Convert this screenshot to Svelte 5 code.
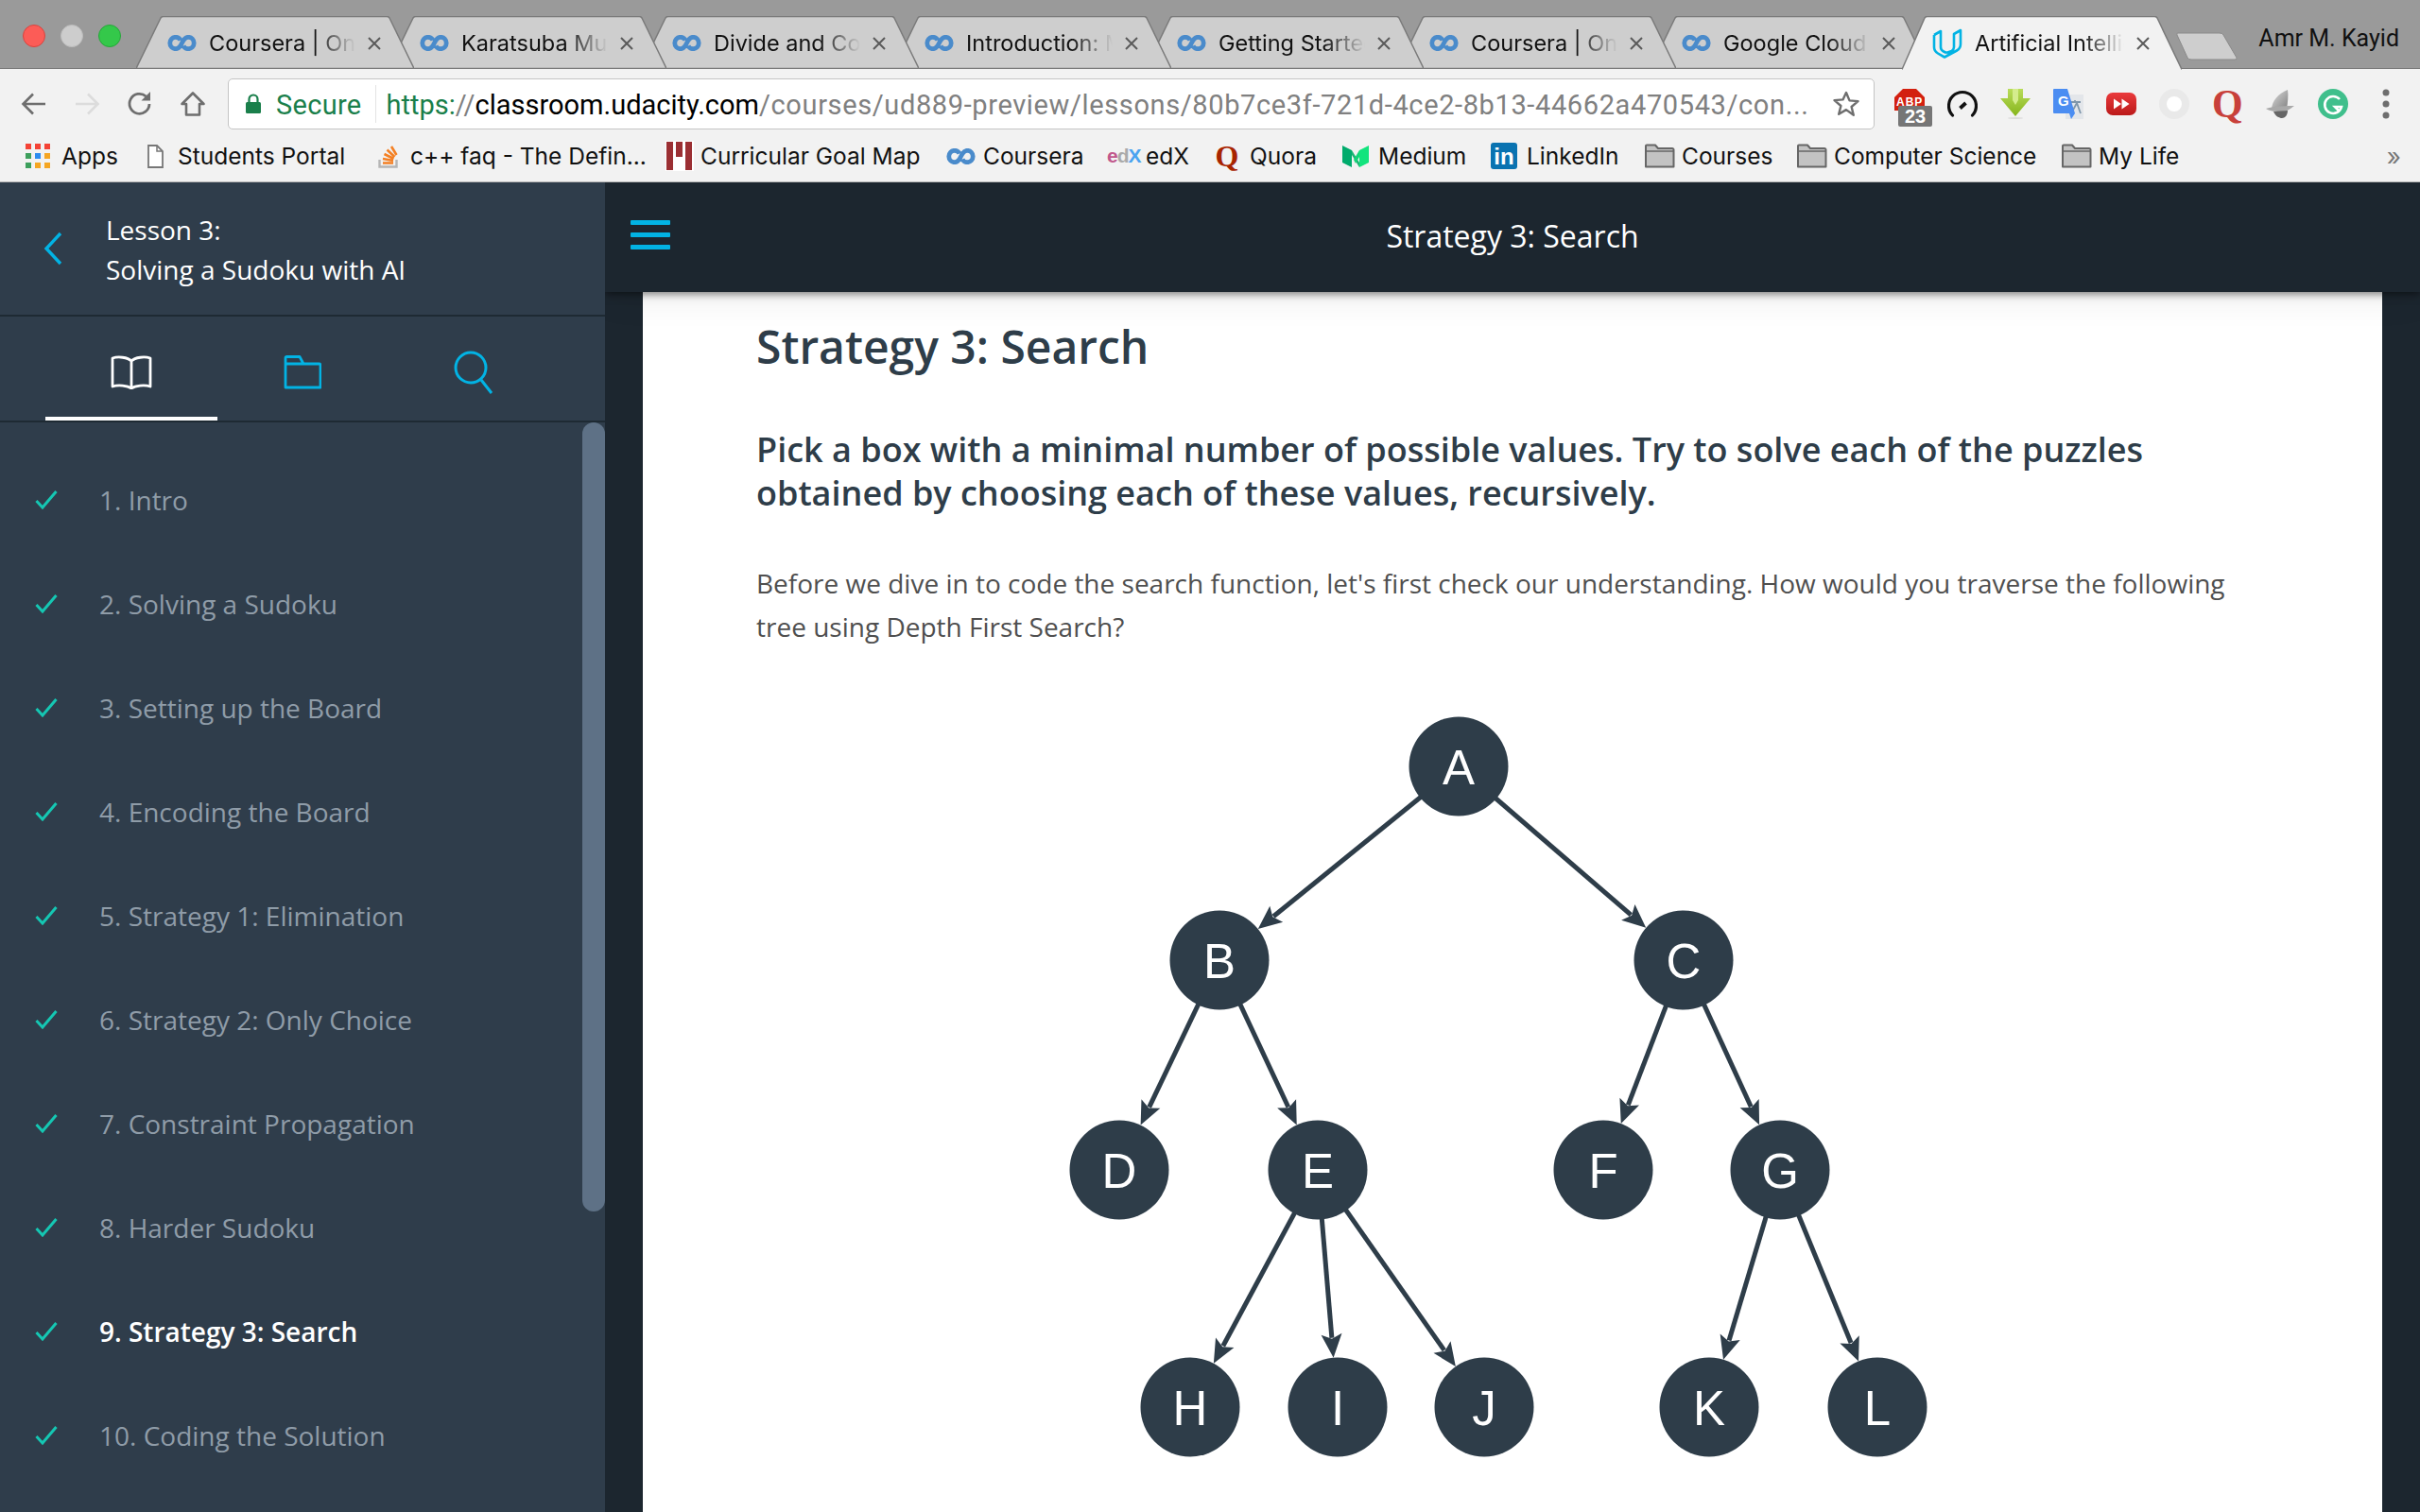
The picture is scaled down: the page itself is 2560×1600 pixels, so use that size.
<script lang="ts">
    const tabs = [
        { title: 'Coursera | Online Courses' },
        { title: 'Karatsuba Multiplication' },
        { title: 'Divide and Conquer' },
        { title: 'Introduction: Merge' },
        { title: 'Getting Started' },
        { title: 'Coursera | Online Courses' },
        { title: 'Google Cloud Platform' },
    ]

    const lessons = [
        '1. Intro',
        '2. Solving a Sudoku',
        '3. Setting up the Board',
        '4. Encoding the Board',
        '5. Strategy 1: Elimination',
        '6. Strategy 2: Only Choice',
        '7. Constraint Propagation',
        '8. Harder Sudoku',
        '9. Strategy 3: Search',
        '10. Coding the Solution',
    ]
    const currentLesson = 8

    // tree drawn on its own canvas, coordinates relative to the svg
    const ox = 680
    const oy = 720
    const nodes: Record<string, [number, number]> = {
        A: [1543, 811],
        B: [1290, 1016],
        C: [1781, 1016],
        D: [1184, 1238],
        E: [1394, 1238],
        F: [1696, 1238],
        G: [1883, 1238],
        H: [1259, 1489],
        I: [1415, 1489],
        J: [1570, 1489],
        K: [1808, 1489],
        L: [1986, 1489],
    }
    const edges = [
        ['A', 'B'], ['A', 'C'], ['B', 'D'], ['B', 'E'], ['C', 'F'], ['C', 'G'],
        ['E', 'H'], ['E', 'I'], ['E', 'J'], ['G', 'K'], ['G', 'L'],
    ]
    const R = 52.5

    function edgeGeom(a: string, b: string) {
        const [x1, y1] = nodes[a]
        const [x2, y2] = nodes[b]
        const dx = x2 - x1
        const dy = y2 - y1
        const len = Math.hypot(dx, dy)
        const ux = dx / len
        const uy = dy / len
        const tipX = x2 - ux * R
        const tipY = y2 - uy * R
        const backX = tipX - ux * 25
        const backY = tipY - uy * 25
        const px = -uy
        const py = ux
        return {
            x1: x1 - ox,
            y1: y1 - oy,
            x2: backX + ux * 4 - ox,
            y2: backY + uy * 4 - oy,
            head: [
                [tipX - ox, tipY - oy],
                [backX + px * 11 - ox, backY + py * 11 - oy],
                [backX + ux * 5 - ox, backY + uy * 5 - oy],
                [backX - px * 11 - ox, backY - py * 11 - oy],
            ].map((p) => p.join(',')).join(' '),
        }
    }
</script>

{#snippet courseraIcon()}
    <svg class="fav" width="31" height="17" viewBox="0 0 30 17" fill="none">
        <path d="M13.500 5.500C12.500 3.500 10.700 2.300 8.300 2.300 4.900 2.300 2.300 5 2.300 8.500s2.600 6.200 6 6.200c2.800 0 4.600-1.600 6.700-6.200 2.100-4.600 3.900-6.200 6.700-6.200 3.400 0 6 2.700 6 6.200s-2.600 6.200-6 6.200c-2.400 0-4.200-1.200-5.200-3.200" stroke="#4a8bcb" stroke-width="4.800"/>
    </svg>
{/snippet}

{#snippet folderIcon()}
    <svg class="fav" width="33" height="26" viewBox="0 0 32 26">
        <path d="M1.500 24.500V2.500a1 1 0 0 1 1-1h9l3 3.500h15a1.500 1.500 0 0 1 1.500 1.500v18z" fill="#c3c3c3" stroke="#666" stroke-width="2" stroke-linejoin="round"/>
        <path d="M1.500 8h29" stroke="#666" stroke-width="1.500"/>
    </svg>
{/snippet}

{#snippet closeIcon()}
    <svg class="tab-close" width="14" height="14" viewBox="0 0 14 14" fill="none"><path d="M1 1l12 12M13 1 1 13" stroke="#5a5a5a" stroke-width="2"/></svg>
{/snippet}

<div class="window">
    <div class="tabstrip">
        <div class="lights">
            <span class="light red"></span>
            <span class="light grey"></span>
            <span class="light green"></span>
        </div>
        <div class="tabs">
            {#each tabs as tab, i}
                <div class="tab" style="z-index: {tabs.length - i}">
                    <svg class="tab-shape" viewBox="0 0 294 56" preserveAspectRatio="none">
                        <path d="M0 55.500 L26 2 Q27 .5 29 .5 H265 Q267 .5 268 2 L294 55.500z" fill="#cecece" stroke="#7a7a7a" stroke-width="1.500"/>
                    </svg>
                    {@render courseraIcon()}
                    <span class="tab-title">{tab.title}</span>
                    {@render closeIcon()}
                </div>
            {/each}
            <div class="tab active">
                <svg class="tab-shape" viewBox="0 0 296 57" preserveAspectRatio="none">
                    <path d="M0 56.500 L24 2 Q25 .5 27 .5 H267 Q269 .5 270 2 L296 56.500" fill="#f2f2f2" stroke="#7a7a7a" stroke-width="1.500"/>
                </svg>
                <svg class="fav" width="32" height="32" viewBox="0 0 32 32" fill="none" stroke="#02b3e4" stroke-width="2.600" stroke-linejoin="round">
                    <path d="M2 7 9 3v17c0 2 1 3.500 3 4.500l3 1.500"/>
                    <path d="M2 7v13c0 3 1.500 5 4 6.500l7 4 13-7c3-1.500 4-4 4-7V2l-7 4v14c0 2-1 3-2.500 4L15 26"/>
                </svg>
                <span class="tab-title">Artificial Intelligence</span>
                {@render closeIcon()}
            </div>
            <svg class="newtab" width="66" height="32" viewBox="0 0 66 32">
                <path d="M2 2H46Q49 2 50 4L64 28Q65 30 62 30H16Q13 30 12 28L1 4Q0 2 2 2z" fill="#cecece" stroke="#8a8a8a" stroke-width="1"/>
            </svg>
        </div>
        <span class="profile">Amr M. Kayid</span>
    </div>

    <div class="toolbar">
        <div class="nav">
            <svg width="28" height="28" viewBox="0 0 28 28" fill="none" stroke="#6e6e6e" stroke-width="2.600"><path d="M26 14H3M13 3.500 2.500 14 13 24.500"/></svg>
            <svg width="28" height="28" viewBox="0 0 28 28" fill="none" stroke="#dcdcdc" stroke-width="2.600"><path d="M2 14h23M15 3.500 25.500 14 15 24.500"/></svg>
            <svg width="28" height="28" viewBox="0 0 28 28" fill="none" stroke="#6e6e6e" stroke-width="2.800"><path d="M24 14a10.500 10.500 0 1 1-3.500-8"/><path d="M25 1v9.500h-9.500z" fill="#6e6e6e" stroke="none"/></svg>
            <svg width="28" height="28" viewBox="0 0 28 28" fill="none" stroke="#6e6e6e" stroke-width="2.600"><path d="M14 2.500 2.500 14H7v11.500h14V14h4.500z" stroke-linejoin="round"/></svg>
        </div>
        <div class="omnibox">
            <svg class="lock" width="18" height="22" viewBox="0 0 18 22"><path d="M4.500 9V6a4.500 4.500 0 0 1 9 0v3" fill="none" stroke="#1a7f4b" stroke-width="2.200"/><rect x="1" y="9" width="16" height="12" rx="1.500" fill="#1a7f4b"/></svg>
            <span class="secure">Secure</span>
            <span class="omni-sep"></span>
            <span class="url"><span class="scheme">https:</span><span>//</span><span class="host">classroom.udacity.com</span><span class="path">/courses/ud889-preview/lessons/80b7ce3f-721d-4ce2-8b13-44662a470543/con...</span></span>
            <svg class="star" width="30" height="30" viewBox="0 0 30 30"><path d="M15 3l3.500 8.400 9 .7-6.900 5.900 2.200 8.800L15 21.100l-7.800 4.700 2.200-8.800-6.900-5.900 9-.7z" fill="none" stroke="#6e6e6e" stroke-width="2.400" stroke-linejoin="round"/></svg>
        </div>
        <div class="extensions">
            <div class="ext abp">
                <svg width="32" height="32" viewBox="0 0 32 32"><path d="M9 0h14l9 9v14H0V9z" fill="#d3200f"/></svg>
                <span class="abp-text">ABP</span>
                <span class="abp-count">23</span>
            </div>
            <svg class="ext" width="32" height="32" viewBox="0 0 32 32" fill="none"><path d="M5.500 28A14.500 14.500 0 1 1 26.500 28" stroke="#111" stroke-width="3.200" stroke-linecap="round"/><path d="M13.500 20.500l6-5.500" stroke="#111" stroke-width="3.800"/></svg>
            <svg class="ext" width="32" height="32" viewBox="0 0 32 32"><defs><linearGradient id="dl" x1="0" y1="0" x2="0" y2="1"><stop offset="0" stop-color="#b9dc5a"/><stop offset="1" stop-color="#86b51c"/></linearGradient></defs><path d="M8 0h16v10h8L16 29 0 10h8z" fill="url(#dl)"/><path d="M13 0h6v12l-3 5-3-5z" fill="#d4ec8d"/><ellipse cx="16" cy="31" rx="8" ry="1" fill="#ddd"/></svg>
            <svg class="ext" width="32" height="32" viewBox="0 0 32 32"><rect x="13" y="6" width="19" height="26" fill="#e3e6ea"/><path d="M17 14h12M23 12v2M19 26l6-11 4 11" fill="none" stroke="#7f97ab" stroke-width="1.800"/><path d="M1 0h14l8 26-4 6-2-6H1a1 1 0 0 1-1-1V1a1 1 0 0 1 1-1z" fill="#4b8df2"/><text x="5" y="18" class="gtext">G</text></svg>
            <svg class="ext" width="32" height="32" viewBox="0 0 32 32"><defs><linearGradient id="yt" x1="0" y1="0" x2="0" y2="1"><stop offset="0" stop-color="#ea3a3c"/><stop offset="1" stop-color="#bb1a1a"/></linearGradient></defs><rect x="0" y="4" width="32" height="24" rx="7" fill="url(#yt)"/><path d="M8 10.500l8 5.500-8 5.500zM16.500 10.500l8 5.500-8 5.500z" fill="#fff"/></svg>
            <svg class="ext" width="32" height="32" viewBox="0 0 32 32"><circle cx="16" cy="16" r="16" fill="#e9e9e9"/><circle cx="16" cy="16" r="8" fill="#fff"/></svg>
            <span class="ext q-ext">Q</span>
            <svg class="ext" width="32" height="32" viewBox="0 0 32 32"><defs><linearGradient id="sail" x1="0" y1="0" x2="1" y2="1"><stop offset="0" stop-color="#dcdcdc"/><stop offset="1" stop-color="#808080"/></linearGradient></defs><path d="M24 1c1 6 0 14-1 20l-16 1c0-9 7-17 17-21z" fill="url(#sail)"/><path d="M1 21c9-3 22-3 30-3-4 3-8 6-13 6-7 0-12 0-17-3z" fill="#a9a9a9"/><path d="M9 24c2 5 6 7 9 7s6-3 6-8z" fill="#666"/></svg>
            <svg class="ext" width="32" height="32" viewBox="0 0 32 32" fill="none"><circle cx="16" cy="16" r="16" fill="#40bf8c"/><path d="M23 11a9 9 0 1 0 2 8h-7l5 5" stroke="#fff" stroke-width="2.600"/></svg>
            <svg class="menu" width="8" height="32" viewBox="0 0 8 32"><circle cx="4" cy="4" r="3.500" fill="#6e6e6e"/><circle cx="4" cy="16" r="3.500" fill="#6e6e6e"/><circle cx="4" cy="28" r="3.500" fill="#6e6e6e"/></svg>
        </div>
    </div>

    <div class="bookmarks">
        <span class="bm apps">
            <svg class="fav" width="26" height="26" viewBox="0 0 26 26">
                <rect width="6" height="6" fill="#f44336"/><rect x="10" width="6" height="6" fill="#f44336"/><rect x="20" width="6" height="6" fill="#f44336"/>
                <rect y="10" width="6" height="6" fill="#3d9f5c"/><rect x="10" y="10" width="6" height="6" fill="#2d8cf0"/><rect x="20" y="10" width="6" height="6" fill="#f5a623"/>
                <rect y="20" width="6" height="6" fill="#3d9f5c"/><rect x="10" y="20" width="6" height="6" fill="#f5a623"/><rect x="20" y="20" width="6" height="6" fill="#f5a623"/>
            </svg>
            Apps
        </span>
        <span class="bm students">
            <svg class="fav" width="17" height="25" viewBox="0 0 17 25" fill="none"><path d="M1 1h9l6 6v17H1z" fill="#fff" stroke="#777" stroke-width="1.800"/><path d="M10 1v6h6" stroke="#777" stroke-width="1.500"/></svg>
            Students Portal
        </span>
        <span class="bm faq">
            <svg class="fav" width="22" height="26" viewBox="0 0 22 26" fill="none"><path d="M1.500 17v7.500h18V17" stroke="#b5b5b5" stroke-width="2.400"/><path d="M5 20.500h11M5 16l11 2M6.500 11l10 5M9.500 6.500l8 7.500M14 3l5.500 9" stroke="#f48024" stroke-width="2.600"/></svg>
            c++ faq - The Defin...
        </span>
        <span class="bm goal">
            <svg class="fav" width="30" height="32" viewBox="0 0 30 32"><rect width="30" height="32" fill="#fff"/><rect x="1" y="1" width="7" height="30" fill="#9b2f33"/><rect x="11" y="1" width="7" height="16" fill="#9b2f33"/><rect x="21" y="1" width="7" height="30" fill="#9b2f33"/></svg>
            Curricular Goal Map
        </span>
        <span class="bm coursera">{@render courseraIcon()} Coursera</span>
        <span class="bm edx">
            <span class="edx-icon"><span class="e1">e</span><span class="e3">d</span><span class="e2">X</span></span>
            edX
        </span>
        <span class="bm quora">
            <span class="q-fav">Q</span>
            Quora
        </span>
        <span class="bm medium">
            <svg class="fav" width="28" height="23" viewBox="0 0 28 23"><path d="M0 0l10 5v18L0 18z" fill="#00ab6c"/><path d="M10 5l8 13v5L10 10z" fill="#1cb574"/><path d="M18 5l-6 10 2 4 4-7z" fill="#12d477"/><path d="M28 0 18 5v18l10-5z" fill="#12e47d"/></svg>
            Medium
        </span>
        <span class="bm linkedin">
            <span class="in-icon">in</span>
            LinkedIn
        </span>
        <span class="bm folder courses">{@render folderIcon()} Courses</span>
        <span class="bm folder science">{@render folderIcon()} Computer Science</span>
        <span class="bm folder">{@render folderIcon()} My Life</span>
        <span class="more">»</span>
    </div>

    <div class="classroom">
        <aside class="sidebar">
            <div class="lesson-head">
                <svg class="back" width="20" height="36" viewBox="0 0 20 36" fill="none"><path d="M18 2 3 18l15 16" stroke="#02b3e4" stroke-width="3.400"/></svg>
                <div class="lesson-name">
                    <div>Lesson 3:</div>
                    <div>Solving a Sudoku with AI</div>
                </div>
            </div>
            <div class="side-tabs">
                <div class="side-tab on">
                    <svg width="44" height="36" viewBox="0 0 44 36" fill="none" stroke="#fff" stroke-width="2.800" stroke-linejoin="round"><path d="M22 6C18 2 8 1 2 3v30c6-2 16-1 20 2 4-3 14-4 20-2V3c-6-2-16-1-20 3zM22 6v29"/></svg>
                </div>
                <div class="side-tab">
                    <svg width="40" height="36" viewBox="0 0 40 36" fill="none" stroke="#02b3e4" stroke-width="2.800" stroke-linejoin="round"><path d="M2 34V3a1.500 1.500 0 0 1 1.500-1.500H17L21 9h16.500A1.500 1.500 0 0 1 39 10.500V34zM2 9h19"/></svg>
                </div>
                <div class="side-tab">
                    <svg width="42" height="46" viewBox="0 0 42 46" fill="none" stroke="#02b3e4" stroke-width="3"><circle cx="18" cy="18" r="16"/><path d="M29 31l11 14"/></svg>
                </div>
            </div>
            <div class="lesson-list">
                <ul>
                    {#each lessons as lesson, i}
                        <li class:current={i === currentLesson}>
                            <svg width="24" height="20" viewBox="0 0 24 20" fill="none"><path d="M1.500 11 8 18 22.500 1" stroke="#15c7b3" stroke-width="3"/></svg>
                            <span>{lesson}</span>
                        </li>
                    {/each}
                </ul>
                <div class="scroll-thumb"></div>
            </div>
        </aside>

        <main class="content">
            <header class="topbar">
                <div class="hamburger"><span></span><span></span><span></span></div>
                <div class="topbar-title">Strategy 3: Search</div>
            </header>
            <div class="page">
                <article>
                    <h1>Strategy 3: Search</h1>
                    <h2>Pick a box with a minimal number of possible values. Try to solve each of the puzzles obtained by choosing each of these values, recursively.</h2>
                    <p>Before we dive in to code the search function, let's first check our understanding. How would you traverse the following tree using Depth First Search?</p>
                </article>
                <svg class="tree" width="1840" height="880" viewBox="0 0 1840 880">
                    {#each edges as [a, b]}
                        {@const g = edgeGeom(a, b)}
                        <line x1={g.x1} y1={g.y1} x2={g.x2} y2={g.y2} stroke="#2e3d49" stroke-width="5"/>
                        <polygon points={g.head} fill="#2e3d49"/>
                    {/each}
                    {#each Object.entries(nodes) as [name, [x, y]]}
                        <circle cx={x - ox} cy={y - oy} r={R} fill="#2e3d49"/>
                        <text x={x - ox} y={y - oy + 19} class="node-label">{name}</text>
                    {/each}
                </svg>
            </div>
        </main>
    </div>
</div>

<style>
    :global(body) {
        margin: 0;
        overflow: hidden;
        background: #1c262f;
    }

    .window {
        width: 2560px;
        height: 1600px;
        display: flex;
        flex-direction: column;
        overflow: hidden;
        font-family: Inter, "Liberation Sans", sans-serif;
    }

    /* browser chrome */
    .tabstrip {
        height: 73px;
        flex: none;
        box-sizing: border-box;
        background: #9a9a9a;
        border-bottom: 1px solid #7a7a7a;
        display: flex;
        position: relative;
    }

    .lights {
        display: flex;
        flex: none;
        gap: 16px;
        padding: 26px 0 0 24px;
        width: 144px;
        box-sizing: border-box;
    }

    .light {
        width: 24px;
        height: 24px;
        flex: none;
        border-radius: 50%;
        box-sizing: border-box;
    }
    .red { background: #fc5c57; border: 1px solid #d8433e; }
    .grey { background: #cdcdcd; border: 1px solid #bcbcbc; }
    .green { background: #34c84a; border: 1px solid #27a63a; }

    .tabs {
        display: flex;
        padding-top: 17px;
        flex: 1;
    }

    .tab {
        width: 294px;
        height: 56px;
        flex: none;
        margin-right: -27px;
        position: relative;
        box-sizing: border-box;
        padding: 1px 35px 0 33px;
        display: flex;
        align-items: center;
        gap: 13px;
        font-size: 23.5px;
        color: #111;
    }

    .tab.active {
        margin-left: -1px;
        width: 296px;
        z-index: 20;
        padding-left: 32px;
        padding-right: 34px;
    }

    .tab-shape {
        position: absolute;
        inset: 0;
        width: 100%;
        height: 56px;
    }

    .active .tab-shape {
        height: 57px;
    }

    .tab > :global(.fav),
    .tab-title,
    .tab > :global(.tab-close) {
        position: relative;
    }

    .tab-title {
        flex: 1;
        min-width: 0;
        overflow: hidden;
        white-space: nowrap;
        -webkit-mask-image: linear-gradient(90deg, #000 72%, transparent 100%);
        mask-image: linear-gradient(90deg, #000 72%, transparent 100%);
    }

    :global(.tab-close) {
        flex: none;
    }

    .newtab {
        flex: none;
        margin: 16px 0 0 21px;
        position: relative;
        z-index: 0;
    }

    .profile {
        position: absolute;
        right: 22px;
        top: 26px;
        font: 25px Roboto, sans-serif;
        color: #111;
    }

    :global(.fav) {
        flex: none;
    }

    .toolbar {
        height: 73px;
        flex: none;
        background: #f2f2f2;
        display: flex;
        align-items: center;
        box-sizing: border-box;
        padding: 1px 0 0 22px;
    }

    .nav {
        display: flex;
        gap: 28px;
        width: 219px;
        flex: none;
    }

    .omnibox {
        width: 1742px;
        height: 54px;
        flex: none;
        box-sizing: border-box;
        border: 1px solid #c4c4c4;
        border-radius: 5px;
        background: #fff;
        display: flex;
        align-items: center;
        padding: 2px 14px 0 17px;
        font: 29px Roboto, sans-serif;
    }

    .lock {
        flex: none;
        margin-top: -2px;
    }

    .secure {
        color: #1a7f4b;
        margin-left: 15px;
        letter-spacing: 0.3px;
    }

    .omni-sep {
        width: 1px;
        height: 40px;
        background: #e4e4e4;
        margin: -2px 11px 0 14px;
    }

    .url {
        flex: 1;
        white-space: nowrap;
        overflow: hidden;
        color: #808080;
    }
    .scheme { color: #1a7f4b; }
    .host { color: #000; }
    .path { letter-spacing: 0.62px; }

    .star {
        margin-top: -2px;
    }

    .extensions {
        display: flex;
        align-items: center;
        flex: 1;
        padding-left: 21px;
        gap: 24px;
    }

    .ext {
        flex: none;
    }

    .abp {
        position: relative;
        width: 32px;
        height: 32px;
    }
    .abp svg { display: block; }

    .abp-text {
        position: absolute;
        top: 7px;
        left: 2px;
        font: 700 12px "Liberation Sans", sans-serif;
        letter-spacing: 1px;
        color: #fff;
    }

    .abp-count {
        position: absolute;
        left: 4px;
        top: 18px;
        width: 36px;
        height: 22px;
        border-radius: 2px;
        background: #767676;
        color: #fff;
        font: 700 20px/23px "Liberation Sans", sans-serif;
        text-align: center;
    }

    .q-ext {
        width: 32px;
        height: 32px;
        color: #c8403a;
        font: 700 42px/32px "Liberation Serif", serif;
        text-align: center;
    }

    .menu {
        margin-left: 12px;
        flex: none;
    }

    .bookmarks {
        height: 47px;
        flex: none;
        box-sizing: border-box;
        background: #f2f2f2;
        border-bottom: 1px solid #b5b5b5;
        display: flex;
        align-items: center;
        padding: 0 12px 8px 27px;
        font-size: 24.5px;
        color: #111;
        position: relative;
    }

    /* each bookmark keeps the width chrome gave it */
    .bm {
        display: flex;
        align-items: center;
        gap: 9px;
        flex: none;
        box-sizing: border-box;
        white-space: nowrap;
    }

    .apps { width: 129px; gap: 12px; }
    .students { width: 244px; gap: 15px; }
    .faq { width: 304px; gap: 12px; }
    .goal { width: 297px; gap: 7px; }
    .coursera { width: 170px; gap: 8px; }
    .edx { width: 114px; }
    .quora { width: 135px; gap: 11px; }
    .medium { width: 157px; gap: 10px; }
    .linkedin { width: 162px; gap: 10px; }
    .courses { width: 161px; gap: 8px; }
    .science { width: 280px; gap: 7px; }
    .folder { gap: 7px; }

    .edx-icon {
        width: 32px;
        font: 700 21px "Liberation Sans", sans-serif;
        letter-spacing: -1px;
    }
    .e1 { color: #c1578b; }
    .e2 { color: #4aa3f0; }
    .e3 { color: #aaa; }

    .q-fav {
        width: 26px;
        color: #a82400;
        font: 700 32px/26px "Liberation Serif", serif;
        text-align: center;
    }

    .in-icon {
        width: 28px;
        height: 28px;
        border-radius: 3px;
        background: #0a73b1;
        color: #fff;
        font: 700 24px/30px "Liberation Sans", sans-serif;
        text-align: center;
    }

    .more {
        margin-left: auto;
        color: #777;
        font-size: 26px;
        padding-right: 8px;
    }

    /* classroom page */
    .classroom {
        flex: 1;
        min-height: 0;
        display: flex;
        font-family: "Open Sans", sans-serif;
    }

    .sidebar {
        width: 640px;
        flex: none;
        background: #2f3d4b;
        display: flex;
        flex-direction: column;
    }

    .lesson-head {
        height: 142px;
        flex: none;
        box-sizing: border-box;
        border-bottom: 2px solid #1e2a33;
        display: flex;
        align-items: center;
        padding: 0 0 0 46px;
        color: #fff;
        font-size: 28px;
        line-height: 42px;
    }

    .back {
        margin-right: 46px;
        flex: none;
    }

    .lesson-name {
        margin-top: 1px;
    }

    .side-tabs {
        height: 112px;
        flex: none;
        box-sizing: border-box;
        border-bottom: 2px solid #1e2a33;
        display: flex;
        padding: 0 48px;
    }

    .side-tab {
        width: 181px;
        display: flex;
        align-items: center;
        justify-content: center;
        box-sizing: border-box;
        padding-top: 11px;
        border-bottom: 4px solid transparent;
    }

    .side-tab.on {
        width: 182px;
        margin-right: -1px;
        border-bottom-color: #fff;
    }

    .lesson-list {
        flex: 1;
        position: relative;
        min-height: 0;
    }

    ul {
        list-style: none;
        margin: 0;
        padding: 27px 0 0;
    }

    li {
        height: 110px;
        display: flex;
        align-items: center;
        padding-left: 37px;
        gap: 44px;
        font-size: 28px;
        color: #8f9ca8;
    }

    li.current {
        color: #fff;
        font-weight: 600;
    }

    .scroll-thumb {
        position: absolute;
        top: 0;
        right: 0;
        width: 24px;
        height: 835px;
        border-radius: 12px;
        background: #5e7186;
    }

    .content {
        flex: 1;
        min-width: 0;
        display: flex;
        flex-direction: column;
        background: #1c262f;
        position: relative;
        overflow: hidden;
    }

    .topbar {
        height: 116px;
        flex: none;
        box-sizing: border-box;
        padding-bottom: 3px;
        background: #1c262f;
        position: relative;
        z-index: 2;
        box-shadow: 0 2px 8px rgba(0, 0, 0, 0.5), 0 0 40px rgba(0, 0, 0, 0.12);
        display: flex;
        align-items: center;
        justify-content: center;
    }

    .hamburger {
        position: absolute;
        left: 27px;
        top: 40px;
        display: flex;
        flex-direction: column;
        gap: 8px;
    }

    .hamburger span {
        display: block;
        width: 42px;
        height: 5px;
        border-radius: 1px;
        background: #02b3e4;
    }

    .topbar-title {
        color: #fff;
        font-size: 32px;
    }

    .page {
        margin: 0 40px;
        flex: 1;
        min-height: 0;
        background: #fff;
        color: #2e3d49;
    }

    article {
        padding: 25px 120px 0 120px;
    }

    h1 {
        margin: 0;
        font-size: 48px;
        font-weight: 600;
        line-height: 66px;
    }

    h2 {
        margin: 53px 0 0;
        font-size: 36px;
        font-weight: 600;
        line-height: 46px;
    }

    p {
        margin: 49px 0 0;
        font-size: 28px;
        line-height: 46px;
        color: #4f4f4f;
    }

    .tree {
        display: block;
        margin-top: 34px;
    }

    .node-label {
        fill: #fff;
        font: 51px "Liberation Sans", sans-serif;
        text-anchor: middle;
    }

    .gtext {
        fill: #fff;
        font: 700 15px "Liberation Sans", sans-serif;
    }
</style>
